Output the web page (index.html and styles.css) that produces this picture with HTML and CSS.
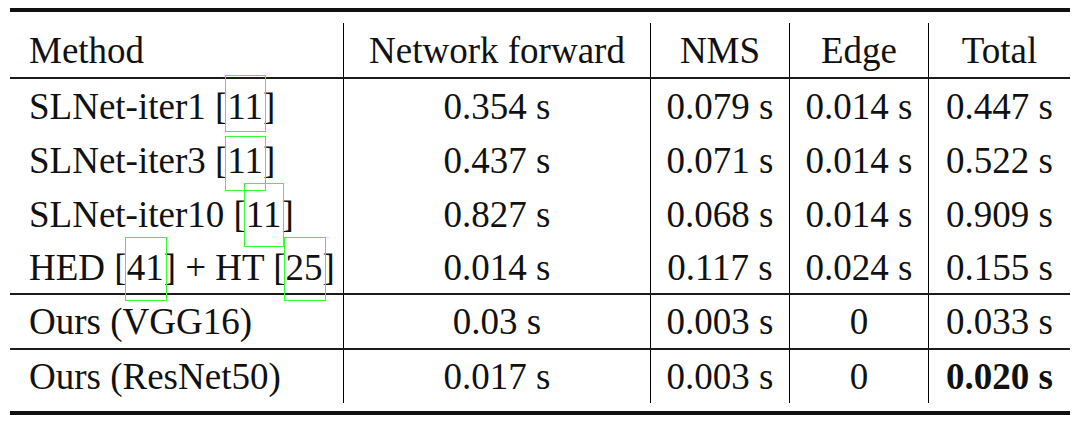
FILE: index.html
```html
<!DOCTYPE html>
<html lang="en">
<head>
    <meta charset="UTF-8">
    <title>Runtime comparison</title>
    <link rel="stylesheet" href="styles.css">
</head>
<body>
    <div class="booktab">
        <div class="row head ruled">
            <div class="cell method">Method</div>
            <div class="cell">Network forward</div>
            <div class="cell">NMS</div>
            <div class="cell">Edge</div>
            <div class="cell">Total</div>
        </div>
        <div class="row">
            <div class="cell method">SLNet-iter1 [<span class="cite c1">11</span>]</div>
            <div class="cell">0.354 s</div>
            <div class="cell">0.079 s</div>
            <div class="cell">0.014 s</div>
            <div class="cell">0.447 s</div>
        </div>
        <div class="row">
            <div class="cell method">SLNet-iter3 [<span class="cite c2">11</span>]</div>
            <div class="cell">0.437 s</div>
            <div class="cell">0.071 s</div>
            <div class="cell">0.014 s</div>
            <div class="cell">0.522 s</div>
        </div>
        <div class="row">
            <div class="cell method">SLNet-iter10 [<span class="cite c3">11</span>]</div>
            <div class="cell">0.827 s</div>
            <div class="cell">0.068 s</div>
            <div class="cell">0.014 s</div>
            <div class="cell">0.909 s</div>
        </div>
        <div class="row ruled">
            <div class="cell method">HED [<span class="cite c4">41</span>] + HT [<span class="cite c4">25</span>]</div>
            <div class="cell">0.014 s</div>
            <div class="cell">0.117 s</div>
            <div class="cell">0.024 s</div>
            <div class="cell">0.155 s</div>
        </div>
        <div class="row ruled tall">
            <div class="cell method">Ours (VGG16)</div>
            <div class="cell">0.03 s</div>
            <div class="cell">0.003 s</div>
            <div class="cell">0</div>
            <div class="cell">0.033 s</div>
        </div>
        <div class="row last">
            <div class="cell method">Ours (ResNet50)</div>
            <div class="cell">0.017 s</div>
            <div class="cell">0.003 s</div>
            <div class="cell">0</div>
            <div class="cell best">0.020 s</div>
        </div>
    </div>
</body>
</html>
```

FILE: styles.css
```css
body {
    margin: 0;
    background: #fff;
    font-family: "Liberation Serif", "Times New Roman", serif;
    color: #111;
}

.booktab {
    width: 1060px;
    margin: 8px 0 0 10px;
    padding: 11px 0 8px;
    border-top: 4px solid #111;
    border-bottom: 4px solid #111;
}

.row {
    display: grid;
    grid-template-columns: 333px 307px 139px 139px 142px;
    height: 54px;
    box-sizing: border-box;
}

.row.head {
    height: 56px;
}

.row.tall {
    height: 55px;
}

.row.last {
    height: 53px;
}

.row.ruled {
    border-bottom: 2px solid #1c1c1c;
}

.cell {
    display: flex;
    align-items: center;
    justify-content: center;
    font-size: 37px;
    white-space: pre;
}

.cell + .cell {
    border-left: 1.5px solid #000;
}

.cell.method {
    justify-content: flex-start;
    padding-left: 19px;
}

.best {
    font-weight: bold;
}

/* hyperref link boxes */
.cite {
    position: relative;
}

.cite::after {
    content: "";
    position: absolute;
    left: -2px;
    right: -3px;
    border: 1px solid #3f3;
}

.c1::after { top: -10px; bottom: -4px; }
.c2::after { top: -3px; bottom: -9px; }
.c3::after { top: -10px; bottom: -11px; }
.c4::after { top: -9px; bottom: -12px; }
```
